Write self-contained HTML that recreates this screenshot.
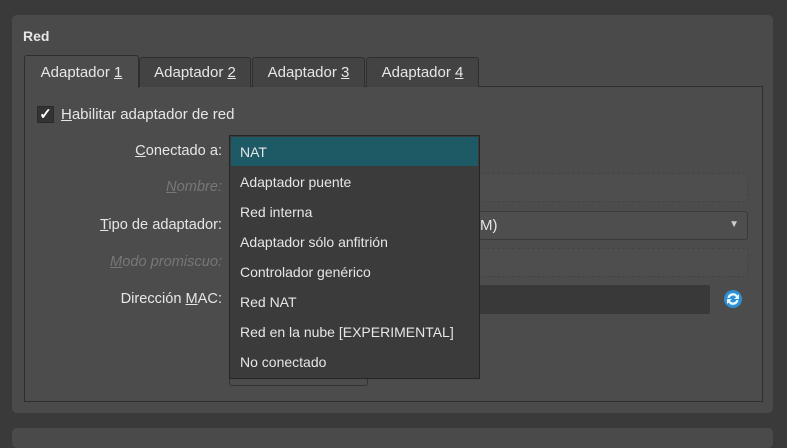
<!DOCTYPE html>
<html><head><style>
body{margin:0;width:787px;height:437px;background:#3a3a3a;font-family:"Liberation Sans",sans-serif;color:#e6e6e6;font-size:14px;position:relative;overflow:hidden}
.a{position:absolute}
.grp{left:12px;top:15px;width:761px;height:398px;background:#4a4a4a;border-radius:5px}
.grp2{left:12px;top:428px;width:761px;height:20px;background:#4a4a4a;border-radius:5px}
.tab{top:57px;height:29px;background:#434343;border:1px solid #2e2e2e;border-bottom:none;border-radius:3px 3px 0 0;line-height:30px;text-align:center;font-size:15px}
.frame{left:24px;top:86px;width:737px;height:314px;border:1px solid #2e2e2e;background:#4c4c4c}
.lbl{text-align:right;width:200px;left:22px;font-size:14.6px}
.combo{left:229px;width:517px;height:27px;border:1px solid #3a3a3a;border-radius:3px;background:#4e4e4e}
.dd{left:229px;top:135px;width:249px;height:242px;background:#3b3b3b;border:1px solid #252525}
.it{position:absolute;left:10px;font-size:14px}
u{text-decoration:underline}
</style></head><body>
<div class="a grp"></div>
<div class="a grp2"></div>
<div class="a" style="left:23px;top:28px;font-weight:bold;font-size:14px">Red</div>
<div class="a frame"></div>
<div class="a tab" style="left:24px;width:113px;top:55px;height:32px;background:#4c4c4c;line-height:34px">Adaptador <u>1</u></div>
<div class="a tab" style="left:139px;width:110px">Adaptador <u>2</u></div>
<div class="a tab" style="left:252px;width:111px">Adaptador <u>3</u></div>
<div class="a tab" style="left:366px;width:111px">Adaptador <u>4</u></div>
<div class="a" style="left:37px;top:106px;width:15px;height:15px;background:#333;border:1px solid #2a2a2a;color:#fff;font-size:15px;line-height:15px;text-align:center;font-weight:bold">✓</div>
<div class="a" style="left:61px;top:106px;font-size:15px"><u>H</u>abilitar adaptador de red</div>
<div class="a lbl" style="top:143px"><u>C</u>onectado a:</div>
<div class="a lbl" style="top:179px;color:#777;font-style:italic"><u>N</u>ombre:</div>
<div class="a lbl" style="top:217px"><u>T</u>ipo de adaptador:</div>
<div class="a lbl" style="top:254px;color:#777;font-style:italic"><u>M</u>odo promiscuo:</div>
<div class="a lbl" style="top:291px">Dirección <u>M</u>AC:</div>
<div class="a combo" style="top:173px;border-style:dashed;border-color:#444"></div>
<div class="a combo" style="top:211px"><span class="a" style="left:250px;top:5px;font-size:15px">M)</span><span class="a" style="right:8px;top:7px;font-size:10px;color:#ccc">▼</span></div>
<div class="a combo" style="top:248px;border-style:dashed;border-color:#444"></div>
<div class="a" style="left:229px;top:285px;width:481px;height:29px;background:#393939;border-radius:2px"></div>
<svg class="a" style="left:723px;top:289px" width="20" height="20" viewBox="0 0 20 20">
<circle cx="10" cy="10" r="9" fill="#2d8fd6"/>
<path d="M4.5 9 A5.5 5.5 0 0 1 14.5 6.5 L16 5 L16 10 L11 10 L13 8.2 A3.5 3.5 0 0 0 6.7 9 Z" fill="#e8f6ff"/>
<path d="M15.5 11 A5.5 5.5 0 0 1 5.5 13.5 L4 15 L4 10 L9 10 L7 11.8 A3.5 3.5 0 0 0 13.3 11 Z" fill="#e8f6ff"/>
</svg>
<div class="a" style="left:229px;top:360px;width:137px;height:24px;border:1px solid #333;border-radius:3px"></div>
<div class="a dd">
<div class="a" style="left:1px;top:1px;width:247px;height:29px;background:#1d5a66"></div>
<div class="it" style="top:8px">NAT</div>
<div class="it" style="top:38px">Adaptador puente</div>
<div class="it" style="top:68px">Red interna</div>
<div class="it" style="top:98px">Adaptador sólo anfitrión</div>
<div class="it" style="top:128px">Controlador genérico</div>
<div class="it" style="top:158px">Red NAT</div>
<div class="it" style="top:188px">Red en la nube [EXPERIMENTAL]</div>
<div class="it" style="top:218px">No conectado</div>
</div>
</body></html>
